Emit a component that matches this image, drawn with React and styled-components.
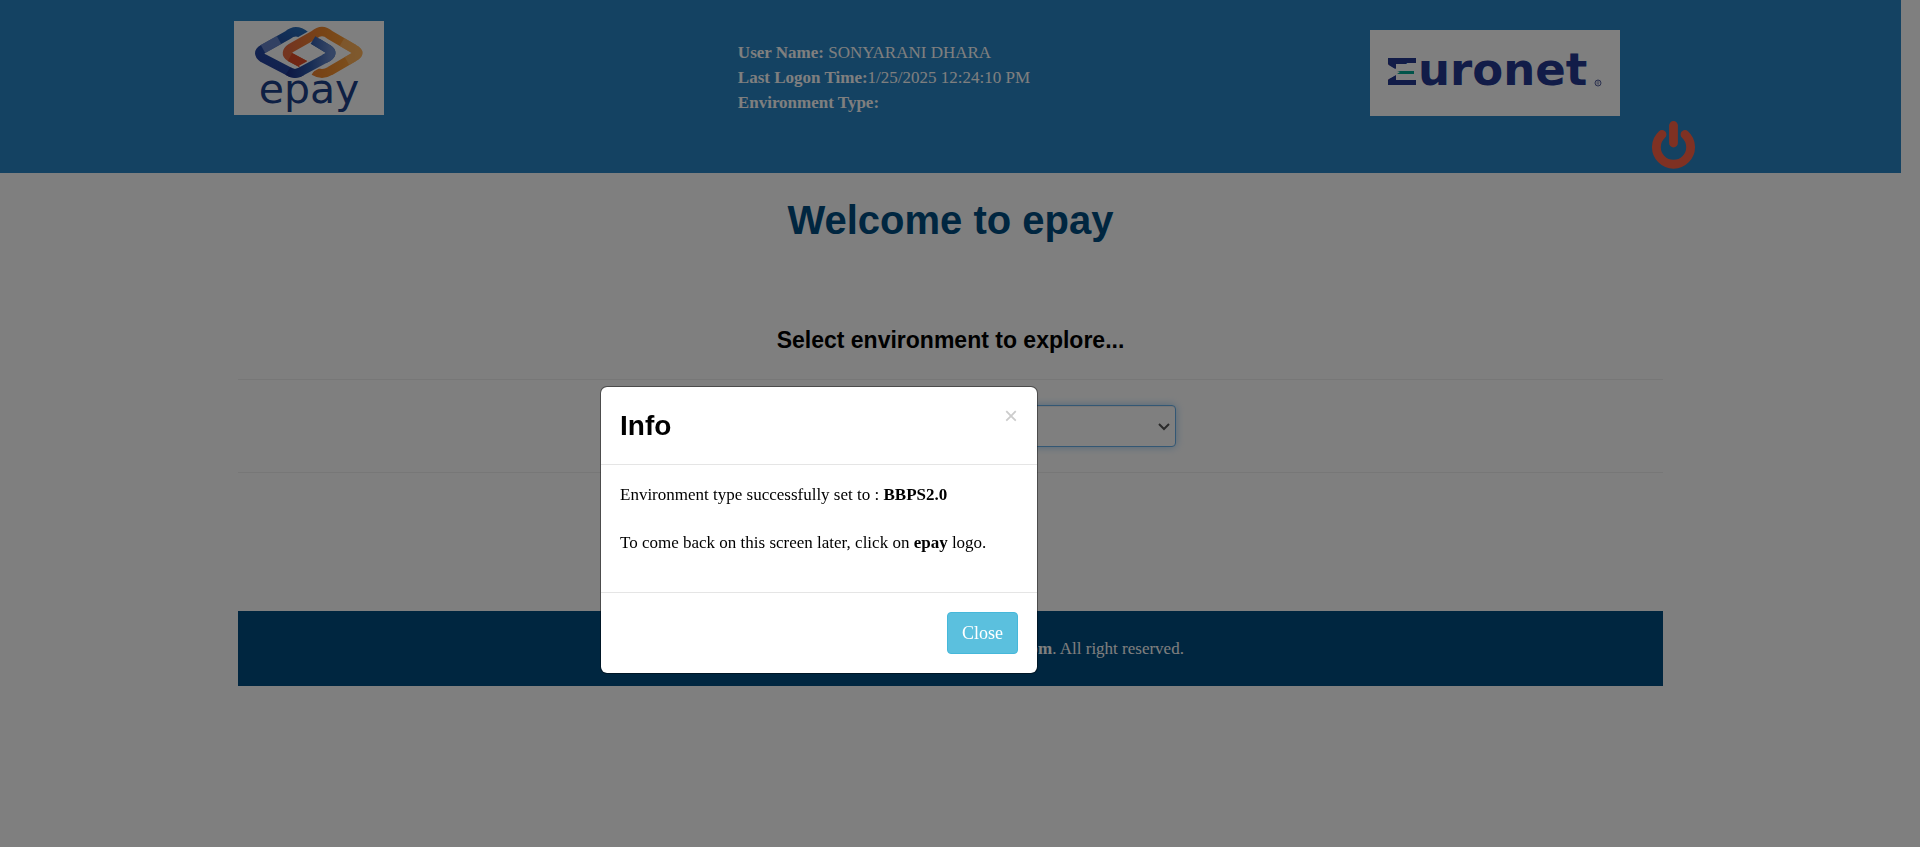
import React from "react";
import styled, { createGlobalStyle } from "styled-components";

const serif = '"Liberation Serif", "Times New Roman", serif';
const sans = '"Liberation Sans", Arial, sans-serif';

const GlobalStyle = createGlobalStyle`
  *, *::before, *::after { box-sizing: border-box; }
  body {
    margin: 0;
    background: #fff;
    color: #000;
    font-family: ${serif};
    font-size: 17px;
    line-height: 25px;
  }
  h1, h2, p { margin: 0; }
`;

const Page = styled.div`
  min-height: 100vh;
  padding-right: 19px;
`;

const Header = styled.header`
  display: grid;
  grid-template-columns: 504fr 632fr 282fr 249fr;
  align-items: start;
  min-height: 173px;
  padding: 21px 0 4px 12.3%;
  background: #2884c4;
  color: #fff;
`;

const LogoLink = styled.a`
  display: block;
  width: 150px;
  svg { display: block; }
`;

const Session = styled.div`
  padding-top: 19px;
`;

const Partner = styled.div`
  padding-top: 9px;
  svg { display: block; }
`;

const PowerButton = styled.button`
  align-self: end;
  justify-self: start;
  padding: 0;
  border: 0;
  background: none;
  color: tomato;
  cursor: pointer;
  svg { display: block; }
`;

const Content = styled.main`
  width: 75%;
  margin: 0 auto;
  text-align: center;
`;

const Title = styled.h1`
  padding-top: 24px;
  color: #004c80;
  font: bold 40px/46px ${sans};
`;

const Prompt = styled.label`
  display: block;
  padding: 83px 0 25px;
  font: bold 23px/28px ${sans};
`;

const SelectRow = styled.div`
  display: flex;
  justify-content: center;
  padding: 25px 0;
  border: solid #eee;
  border-width: 1px 0;
`;

const SelectBox = styled.div`
  position: relative;
  width: 450px;
  svg {
    position: absolute;
    top: 18px;
    right: 6px;
    pointer-events: none;
  }
`;

const Select = styled.select`
  display: block;
  width: 100%;
  height: 42px;
  padding: 6px 12px;
  border: 1px solid #66afe9;
  border-radius: 4px;
  outline: 0;
  appearance: none;
  background: #fff;
  color: #555;
  font: 17px/25px ${serif};
  box-shadow: inset 0 1px 1px rgba(0, 0, 0, 0.075), 0 0 8px rgba(102, 175, 233, 0.6);
`;

const Footer = styled.footer`
  width: 75%;
  margin: 138px auto 0;
  padding: 25px;
  background: #004c80;
  color: #fff;
  text-align: center;
`;

const Backdrop = styled.div`
  position: fixed;
  inset: 0;
  display: flex;
  align-items: flex-start;
  padding: 386px 0 0 31.25%;
  background: rgba(0, 0, 0, 0.5);
`;

const Dialog = styled.section`
  width: 438px;
  border: 1px solid rgba(0, 0, 0, 0.4);
  border-radius: 7px;
  background: #fff;
  background-clip: padding-box;
`;

const DialogHeader = styled.div`
  display: flex;
  justify-content: space-between;
  align-items: flex-start;
  padding: 19px 19px 18px;
  border-bottom: 1px solid #e5e5e5;
`;

const DialogTitle = styled.h2`
  font: bold 28px/40px ${sans};
`;

const DismissButton = styled.button`
  padding: 0;
  border: 0;
  background: none;
  color: #ccc;
  font: 24px/20px ${sans};
  cursor: pointer;
`;

const DialogBody = styled.div`
  display: grid;
  gap: 24px;
  padding: 18px 19px 37px;
  line-height: 24px;
`;

const DialogFooter = styled.div`
  display: flex;
  justify-content: flex-end;
  padding: 19px;
  border-top: 1px solid #e5e5e5;
`;

const CloseButton = styled.button`
  height: 42px;
  padding: 0 14px;
  border: 1px solid #46b8da;
  border-radius: 4px;
  background: #5bc0de;
  color: #fff;
  font: 18px/25px ${serif};
  cursor: pointer;
`;

function EpayLogo() {
  return (
    <svg width="150" height="94" viewBox="0 0 150 94" role="img" aria-label="epay">
      <defs>
        <linearGradient id="blue" x1="0" y1="1" x2="1" y2="0">
          <stop offset="0" stopColor="#263c9c" />
          <stop offset="0.5" stopColor="#2450a4" />
          <stop offset="1" stopColor="#287cc4" />
        </linearGradient>
        <linearGradient id="blueTail" x1="0" y1="0" x2="1" y2="0">
          <stop offset="0" stopColor="#1c3088" />
          <stop offset="0.5" stopColor="#2c58a8" />
          <stop offset="1" stopColor="#6c8ccc" />
        </linearGradient>
        <linearGradient id="orange" x1="0" y1="0" x2="1" y2="0">
          <stop offset="0" stopColor="#e86a40" />
          <stop offset="0.5" stopColor="#f0882c" />
          <stop offset="1" stopColor="#fca43c" />
        </linearGradient>
      </defs>
      <rect width="150" height="94" fill="#fff" />
      <g fill="none" strokeWidth="9" strokeLinejoin="round">
        <path d="M72 15Q62 7 54 14L29 28Q22 32 29 37L54 50Q61 55 68 50L94 36Q100 32 94 28L76 17" stroke="url(#blue)" />
        <path d="M29 28L45 19" stroke="#8298d4" strokeOpacity="0.7" />
        <path d="M74 46L56 36Q50 32 57 27L80 14Q88 8 95 13" stroke="#fff" strokeWidth="12" />
        <path d="M71 44L56 36Q50 32 57 27L80 14Q88 7 96 14L120 28Q128 32 120 36L96 50Q88 55 80 50" stroke="url(#orange)" />
        <path d="M71 44L56 36" stroke="#e04c28" />
        <path d="M108 21L120 28Q128 32 120 36L113 40" stroke="#ffbc70" strokeOpacity="0.6" />
        <path d="M68 50L90 38" stroke="#fff" strokeWidth="12" />
        <path d="M54 50Q61 55 68 50L94 36Q100 32 94 28L79 19" stroke="url(#blueTail)" />
      </g>
      <text x="75" y="82" textAnchor="middle" fill="#1c4088" fontFamily='"DejaVu Sans", sans-serif' fontSize="41">epay</text>
    </svg>
  );
}

function EuronetLogo() {
  return (
    <svg width="250" height="86" viewBox="0 0 250 86" role="img" aria-label="Euronet">
      <rect width="250" height="86" fill="#fff" />
      <text y="55" fill="#243890" fontFamily='"DejaVu Sans", sans-serif' fontWeight="bold">
        <tspan x="15" fontSize="36">E</tspan>
        <tspan x="48" fontSize="45">uronet</tspan>
      </text>
      <rect x="25" y="34" width="18" height="16" fill="#fff" />
      <path d="M17 34L27 40V45L17 50Z" fill="#fff" />
      <path d="M27 41H44V44H27L30 42Z" fill="#00a894" />
      <path d="M18 28H46V33H26V39L18 34ZM18 55H46V50H26V45L18 50Z" fill="#243890" />
      <circle cx="228" cy="53" r="3" fill="none" stroke="#5864a0" />
      <path d="M227 55V51H229V53H227M228 53L229 55" fill="none" stroke="#5864a0" strokeWidth="0.5" />
    </svg>
  );
}

function PowerIcon() {
  return (
    <svg width="43" height="48" viewBox="0 0 43 48" fill="none" stroke="currentColor" strokeWidth="8.8" strokeLinecap="round" aria-hidden="true">
      <path d="M10 13.5A17.1 17.1 0 1 0 33 13.5" />
      <path d="M21.5 4.5V22" />
    </svg>
  );
}

function Chevron() {
  return (
    <svg width="12" height="8" viewBox="0 0 12 8" fill="none" stroke="#555" strokeWidth="2" aria-hidden="true">
      <path d="M1 1L6 6L11 1" />
    </svg>
  );
}

export default function App() {
  return (
    <>
      <GlobalStyle />
      <Page>
        <Header>
          <LogoLink href="#home"><EpayLogo /></LogoLink>
          <Session>
            <div><b>User Name:</b> SONYARANI DHARA</div>
            <div><b>Last Logon Time:</b>1/25/2025 12:24:10 PM</div>
            <div><b>Environment Type:</b></div>
          </Session>
          <Partner><EuronetLogo /></Partner>
          <PowerButton type="button" aria-label="Log out"><PowerIcon /></PowerButton>
        </Header>
        <Content>
          <Title>Welcome to epay</Title>
          <Prompt htmlFor="environment">Select environment to explore...</Prompt>
          <SelectRow>
            <SelectBox>
              <Select id="environment" defaultValue="BBPS2.0">
                <option>BBPS2.0</option>
              </Select>
              <Chevron />
            </SelectBox>
          </SelectRow>
        </Content>
        <Footer>Copyright © 2025 <b>www.euronetworldwide.com</b>. All right reserved.</Footer>
      </Page>
      <Backdrop>
        <Dialog role="dialog" aria-modal="true" aria-labelledby="dialog-title">
          <DialogHeader>
            <DialogTitle id="dialog-title">Info</DialogTitle>
            <DismissButton type="button" aria-label="Dismiss">×</DismissButton>
          </DialogHeader>
          <DialogBody>
            <p>Environment type successfully set to : <b>BBPS2.0</b></p>
            <p>To come back on this screen later, click on <b>epay</b> logo.</p>
          </DialogBody>
          <DialogFooter>
            <CloseButton type="button">Close</CloseButton>
          </DialogFooter>
        </Dialog>
      </Backdrop>
    </>
  );
}
